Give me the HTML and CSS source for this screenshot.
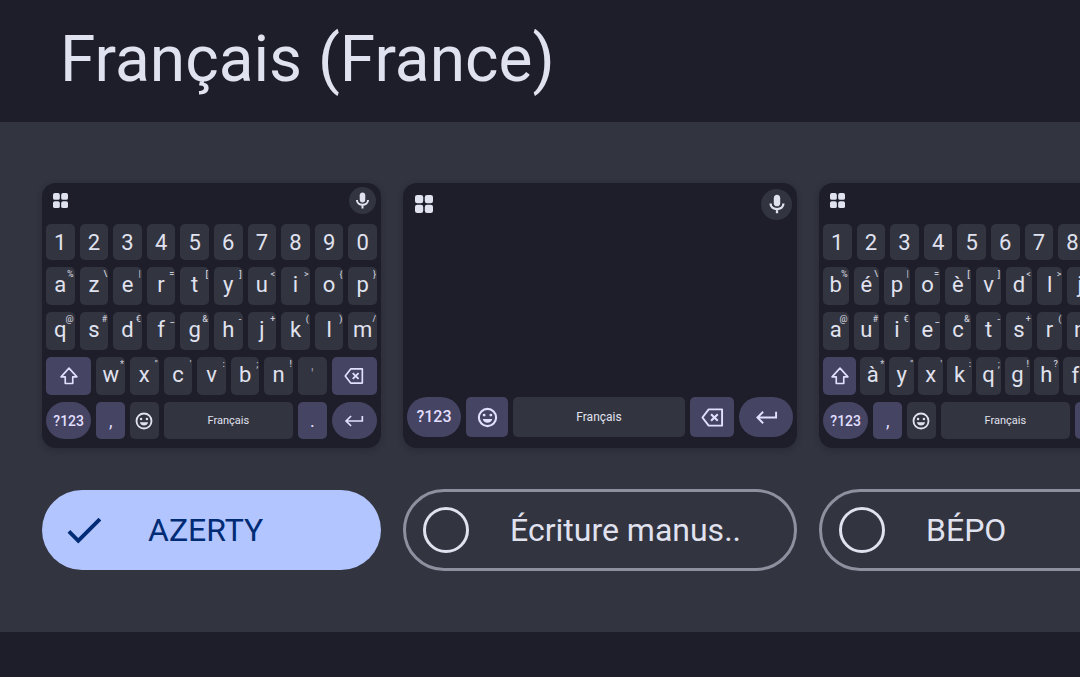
FILE: index.html
```html
<!DOCTYPE html>
<html lang="fr">

<head>
    <meta charset="UTF-8">
    <meta name="viewport" content="width=device-width, initial-scale=1.0">
    <title>Français (France)</title>
    <link rel="stylesheet" href="styles.css">
</head>

<body>
    <!-- shared icons -->
    <svg class="sprite" aria-hidden="true">
        <symbol id="apps" viewBox="0 0 16 16">
            <rect x="0" y="0" width="7.3" height="7.3" rx="2" />
            <rect x="8.7" y="0" width="7.3" height="7.3" rx="2" />
            <rect x="0" y="8.7" width="7.3" height="7.3" rx="2" />
            <rect x="8.7" y="8.7" width="7.3" height="7.3" rx="2" />
        </symbol>
        <symbol id="mic" viewBox="0 0 24 24">
            <path d="M12 14.500c2.100 0 3.500-1.500 3.500-3.400V5.400C15.500 3.500 14.100 2 12 2S8.500 3.500 8.500 5.400v5.700c0 1.900 1.400 3.400 3.500 3.400z" />
            <path d="M5 11.500c0 3.600 3 6 7 6s7-2.400 7-6M12 17.500V22" fill="none" stroke="currentColor" stroke-width="2.500" />
        </symbol>
        <symbol id="shift" viewBox="0 0 24 24">
            <path d="M12 2.500L2.500 13H7.500v8h9v-8h5z" fill="none" stroke="currentColor" stroke-width="2" stroke-linejoin="round" />
        </symbol>
        <symbol id="smile" viewBox="0 0 24 24">
            <circle cx="12" cy="12" r="9" fill="none" stroke="currentColor" stroke-width="2.200" />
            <circle cx="8.500" cy="9.500" r="1.500" />
            <circle cx="15.500" cy="9.500" r="1.500" />
            <path d="M7 13.500h10c-.5 2.300-2.500 4-5 4s-4.500-1.700-5-4z" />
        </symbol>
        <symbol id="erase" viewBox="0 0 24 24">
            <path d="M8 3.500h14v17H8L1.500 12z" fill="none" stroke="currentColor" stroke-width="2" stroke-linejoin="round" />
            <path d="M10.500 8.500l7 7M17.500 8.500l-7 7" fill="none" stroke="currentColor" stroke-width="2.200" />
        </symbol>
        <symbol id="enter" viewBox="0 0 24 24">
            <path d="M22 6v6H3.500M8.500 6L2.500 12l6 6" fill="none" stroke="currentColor" stroke-width="2" />
        </symbol>
        <symbol id="check" viewBox="0 0 24 24">
            <path d="M9 16.170L4.830 12l-1.420 1.410L9 19 21 7l-1.410-1.410z" />
        </symbol>
    </svg>

    <header class="title">
        <h1>Français (France)</h1>
    </header>

    <main class="layouts">
        <!-- AZERTY -->
        <section class="layout">
            <div class="keyboard">
                <div class="toolbar">
                    <button class="tool" aria-label="Menu"><svg><use href="#apps" /></svg></button>
                    <button class="mic" aria-label="Micro"><svg><use href="#mic" /></svg></button>
                </div>
                <div class="row numbers">
                    <button>1</button>
                    <button>2</button>
                    <button>3</button>
                    <button>4</button>
                    <button>5</button>
                    <button>6</button>
                    <button>7</button>
                    <button>8</button>
                    <button>9</button>
                    <button>0</button>
                </div>
                <div class="row">
                    <button>a<sup>%</sup></button>
                    <button>z<sup>\</sup></button>
                    <button>e<sup>|</sup></button>
                    <button>r<sup>=</sup></button>
                    <button>t<sup>[</sup></button>
                    <button>y<sup>]</sup></button>
                    <button>u<sup>&lt;</sup></button>
                    <button>i<sup>&gt;</sup></button>
                    <button>o<sup>{</sup></button>
                    <button>p<sup>}</sup></button>
                </div>
                <div class="row">
                    <button>q<sup>@</sup></button>
                    <button>s<sup>#</sup></button>
                    <button>d<sup>€</sup></button>
                    <button>f<sup>_</sup></button>
                    <button>g<sup>&amp;</sup></button>
                    <button>h<sup>-</sup></button>
                    <button>j<sup>+</sup></button>
                    <button>k<sup>(</sup></button>
                    <button>l<sup>)</sup></button>
                    <button>m<sup>/</sup></button>
                </div>
                <div class="row">
                    <button class="wide accent" aria-label="Majuscule"><svg><use href="#shift" /></svg></button>
                    <button>w<sup>*</sup></button>
                    <button>x<sup>"</sup></button>
                    <button>c<sup>'</sup></button>
                    <button>v<sup>:</sup></button>
                    <button>b<sup>;</sup></button>
                    <button>n<sup>!</sup></button>
                    <button class="quote">'</button>
                    <button class="wide accent" aria-label="Effacer"><svg><use href="#erase" /></svg></button>
                </div>
                <div class="row bottom">
                    <button class="wide accent round">?123</button>
                    <button class="accent mark">,</button>
                    <button aria-label="Emoji"><svg><use href="#smile" /></svg></button>
                    <button class="space">Français</button>
                    <button class="accent mark">.</button>
                    <button class="wide accent round" aria-label="Entrée"><svg><use href="#enter" /></svg></button>
                </div>
            </div>
            <label class="option checked">
                <span class="tick">
                    <input type="checkbox" checked>
                    <svg><use href="#check" /></svg>
                </span>
                <span>AZERTY</span>
            </label>
        </section>

        <!-- handwriting -->
        <section class="layout large">
            <div class="keyboard">
                <div class="toolbar">
                    <button class="tool" aria-label="Menu"><svg><use href="#apps" /></svg></button>
                    <button class="mic" aria-label="Micro"><svg><use href="#mic" /></svg></button>
                </div>
                <div class="row handwriting">
                    <button class="accent round">?123</button>
                    <button class="accent" aria-label="Emoji"><svg><use href="#smile" /></svg></button>
                    <button class="space">Français</button>
                    <button class="accent" aria-label="Effacer"><svg><use href="#erase" /></svg></button>
                    <button class="accent round" aria-label="Entrée"><svg><use href="#enter" /></svg></button>
                </div>
            </div>
            <label class="option">
                <span class="tick"><input type="checkbox"></span>
                <span>Écriture manus..</span>
            </label>
        </section>

        <!-- BÉPO -->
        <section class="layout">
            <div class="keyboard">
                <div class="toolbar">
                    <button class="tool" aria-label="Menu"><svg><use href="#apps" /></svg></button>
                    <button class="mic" aria-label="Micro"><svg><use href="#mic" /></svg></button>
                </div>
                <div class="row numbers">
                    <button>1</button>
                    <button>2</button>
                    <button>3</button>
                    <button>4</button>
                    <button>5</button>
                    <button>6</button>
                    <button>7</button>
                    <button>8</button>
                    <button>9</button>
                    <button>0</button>
                </div>
                <div class="row eleven">
                    <button>b<sup>%</sup></button>
                    <button>é<sup>\</sup></button>
                    <button>p<sup>|</sup></button>
                    <button>o<sup>=</sup></button>
                    <button>è<sup>[</sup></button>
                    <button>v<sup>]</sup></button>
                    <button>d<sup>&lt;</sup></button>
                    <button>l<sup>&gt;</sup></button>
                    <button>j<sup>{</sup></button>
                    <button>z<sup>}</sup></button>
                    <button>w</button>
                </div>
                <div class="row eleven">
                    <button>a<sup>@</sup></button>
                    <button>u<sup>#</sup></button>
                    <button>i<sup>€</sup></button>
                    <button>e<sup>_</sup></button>
                    <button>c<sup>&amp;</sup></button>
                    <button>t<sup>-</sup></button>
                    <button>s<sup>+</sup></button>
                    <button>r<sup>(</sup></button>
                    <button>n<sup>)</sup></button>
                    <button>m<sup>/</sup></button>
                    <button>ç</button>
                </div>
                <div class="row shifted">
                    <button class="accent" aria-label="Majuscule"><svg><use href="#shift" /></svg></button>
                    <button>à<sup>*</sup></button>
                    <button>y<sup>"</sup></button>
                    <button>x<sup>'</sup></button>
                    <button>k<sup>:</sup></button>
                    <button>q<sup>;</sup></button>
                    <button>g<sup>!</sup></button>
                    <button>h<sup>?</sup></button>
                    <button>f</button>
                    <button class="quote">'</button>
                    <button class="accent" aria-label="Effacer"><svg><use href="#erase" /></svg></button>
                </div>
                <div class="row bottom">
                    <button class="wide accent round">?123</button>
                    <button class="accent mark">,</button>
                    <button aria-label="Emoji"><svg><use href="#smile" /></svg></button>
                    <button class="space">Français</button>
                    <button class="accent mark">.</button>
                    <button class="wide accent round" aria-label="Entrée"><svg><use href="#enter" /></svg></button>
                </div>
            </div>
            <label class="option">
                <span class="tick"><input type="checkbox"></span>
                <span>BÉPO</span>
            </label>
        </section>
    </main>
</body>

</html>
```
FILE: styles.css
```css
* {
    box-sizing: border-box;
}

body {
    margin: 0;
    background-color: #1d1e29;
    color: #e0e2ef;
    font-family: Roboto, sans-serif;
}

.sprite {
    display: none;
}

svg {
    display: block;
    fill: currentColor;
}

.title {
    padding: 20px 60px 22px;
}

h1 {
    margin: 0;
    font-size: 64px;
    font-weight: 400;
    line-height: 80px;
    white-space: nowrap;
}

.layouts {
    display: flex;
    gap: 22px;
    padding: 61px 42px;
    background-color: #32343f;
    overflow: hidden;
}

.layout {
    display: flex;
    flex: none;
    flex-direction: column;
    gap: 41px;
    width: 339px;
}

.large {
    width: 394px;
}

/* keyboard preview */
.keyboard {
    display: flex;
    flex: 1;
    flex-direction: column;
    gap: 7px;
    padding: 4px 4px 9px;
    border-radius: 14px;
    background-color: #1d1e29;
    box-shadow: 0 2px 6px rgba(20, 20, 30, 0.3);
}

.toolbar {
    display: flex;
    align-items: center;
    justify-content: space-between;
    height: 30px;
    padding: 0 1px 3px 7px;
}

button {
    position: relative;
    display: flex;
    align-items: center;
    justify-content: center;
    min-width: 0;
    padding: 0;
    border: 0;
    border-radius: 5px;
    background-color: #32343f;
    color: #e0e2ef;
    font-family: inherit;
    font-size: 22px;
    line-height: 26px;
}

.tool {
    background: none;
}

.tool svg {
    width: 15px;
    height: 15px;
}

.mic {
    width: 27px;
    height: 27px;
    border-radius: 50%;
}

.mic svg {
    width: 19px;
    height: 19px;
}

.row {
    display: grid;
    grid-template-columns: repeat(20, 1fr);
    gap: 5px;
    height: 38px;
}

.row button {
    grid-column: span 2;
}

.row button:has(sup) {
    padding-bottom: 2px;
}

.row .wide {
    grid-column: span 3;
}

.row .space {
    grid-column: span 8;
    font-size: 11px;
}

.row svg {
    width: 20px;
    height: 20px;
}

.numbers {
    height: 36px;
}

.numbers button {
    padding-top: 2px;
}

.bottom {
    height: 37px;
}

.eleven {
    grid-template-columns: repeat(11, 1fr);
}

.shifted {
    grid-template-columns: 4fr repeat(9, 3fr) 4fr;
    gap: 4px;
}

.eleven button,
.shifted button {
    grid-column: auto;
}

/* long press hint in the corner of a key */
sup {
    position: absolute;
    top: 2px;
    right: 1px;
    color: #c8cad6;
    font-size: 9px;
    font-weight: 500;
    line-height: 10px;
}

.row .accent {
    background-color: #454463;
    color: #e2dfff;
}

.row .round {
    border-radius: 20px;
    font-size: 14px;
    font-weight: 500;
}

.row .quote {
    padding-bottom: 4px;
    color: #9b9caa;
    font-size: 15px;
}

.row .mark {
    font-size: 18px;
}

.large .keyboard {
    justify-content: space-between;
    padding-bottom: 11px;
}

.large .toolbar {
    height: 34px;
    padding: 0 1px 0 8px;
}

.large .tool svg {
    width: 18px;
    height: 18px;
}

.large .mic {
    width: 31px;
    height: 31px;
}

.large .mic svg {
    width: 22px;
    height: 22px;
}

.handwriting {
    grid-template-columns: 54px 42px 1fr 44px 54px;
    height: 40px;
}

.row.handwriting button {
    grid-column: auto;
}

.handwriting .round {
    font-size: 16px;
}

.row.handwriting .space {
    font-size: 12px;
}

.handwriting svg {
    width: 23px;
    height: 23px;
}

/* layout choice */
.option {
    display: flex;
    align-items: center;
    gap: 41px;
    height: 82px;
    padding: 0 17px;
    border: 3px solid #8f909f;
    border-radius: 41px;
    font-size: 32px;
    line-height: 40px;
    white-space: nowrap;
}

.checked {
    height: 80px;
    margin: 1px 0;
    padding: 0 19px;
    border: 0;
    background-color: #b2c5ff;
    color: #002b75;
}

.tick {
    display: grid;
}

.tick input,
.tick svg {
    grid-area: 1 / 1;
    width: 46px;
    height: 46px;
    margin: 0;
}

.tick input {
    appearance: none;
    border: 3px solid #e0e2ef;
    border-radius: 50%;
}

.tick input:checked {
    border: 0;
}
```
